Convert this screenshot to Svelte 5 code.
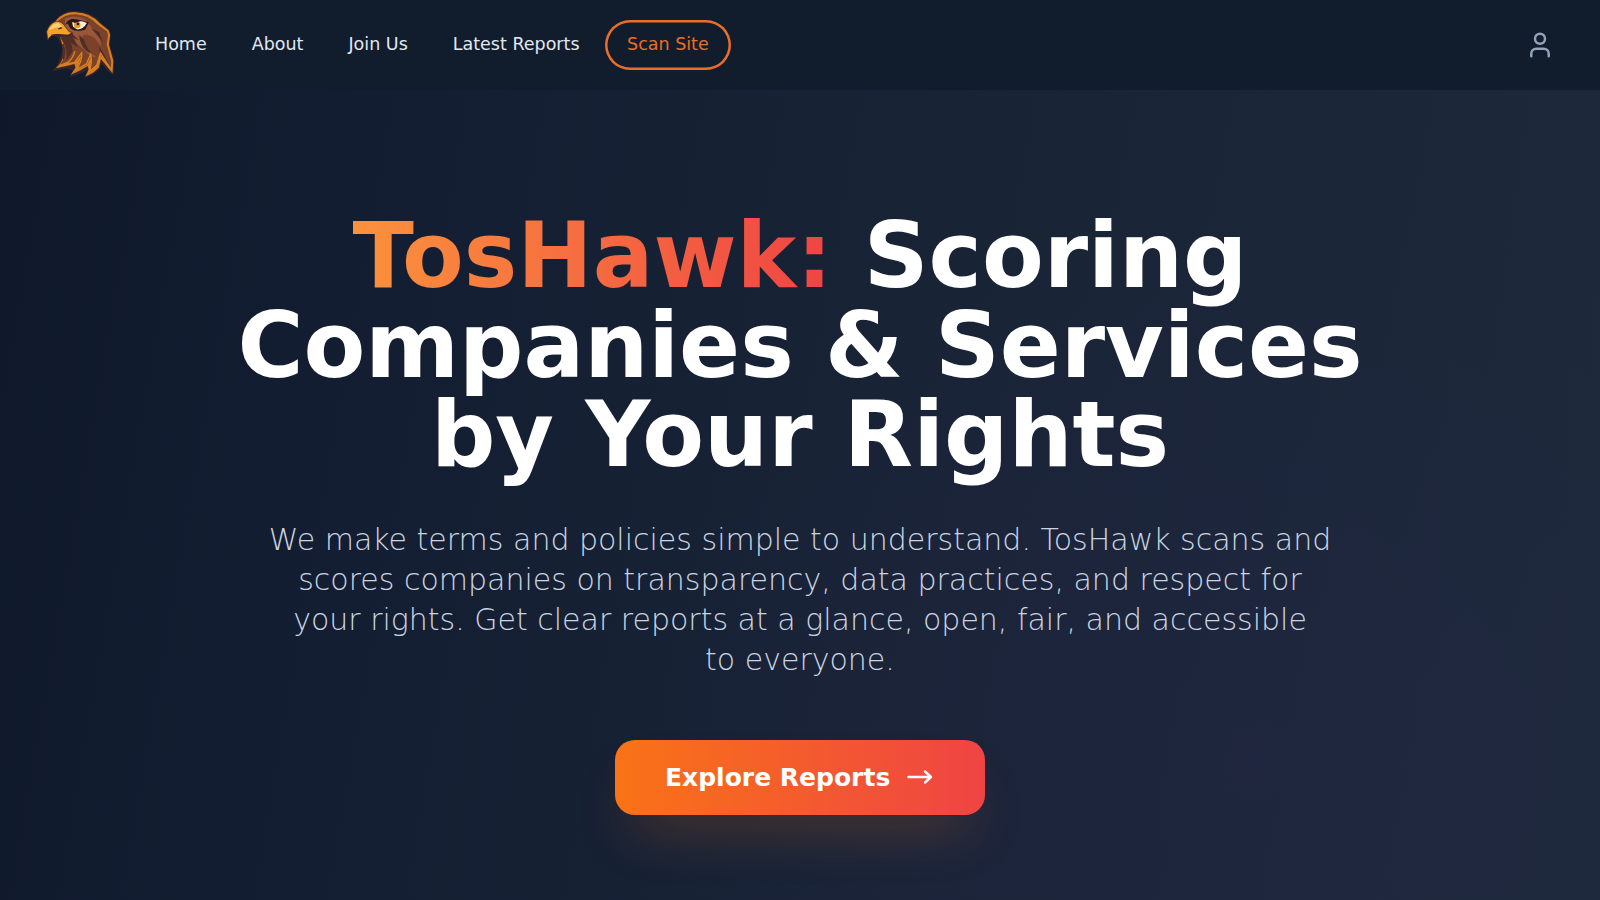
<script>
  const links = ['Home', 'About', 'Join Us', 'Latest Reports'];
</script>

<div class="page">
  <header>
    <svg class="logo" viewBox="30 30 207 207" preserveAspectRatio="none" role="img" aria-label="TosHawk">
      <path class="halo" d="M37 122 L33 96 Q39 72 62 61 Q82 35 119 36 Q167 38 194 70 L218 90 L222 106 L219 132 L232 178 L230 221 L213 208 L193 185 L190 203 L170 219 L145 228 L151 207 L125 218 L101 226 L112 206 L91 201 L49 210 Q83 179 78 132 L64 110 L44 106 Z" />
      <path class="rim" d="M61 64 Q84 37 120 39 Q165 41 190 71 L216 92 L220 105 L216 132 L229 178 L227 215 L193 174 L187 199 L170 213 L148 224 L157 205 L155 194 L129 208 L105 219 L119 199 L116 188 L95 193 L61 200 Q93 174 80 131 Z" />
      <path class="body" d="M67 65 Q88 44 119 45 Q158 47 182 74 L211 95 L214 105 L210 132 L223 180 L222 200 L192 161 L181 192 L160 210 L165 180 L163 170 L152 192 L122 206 L137 164 L119 181 L94 185 L72 191 Q97 165 83 122 Z" />
      <path class="light" d="M88 57 Q122 44 151 63 L170 89 L189 105 L194 139 L174 113 L153 103 L138 107 L151 136 L179 169 L163 166 L142 146 L121 126 L111 101 L89 84 Z" />
      <path class="shade" d="M70 103 L109 101 L129 120 L110 112 L128 141 L106 127 L111 151 L92 178 Q99 147 79 119 Z M129 105 L144 117 Q150 143 174 162 L151 151 Q132 134 129 105 Z M165 85 L188 97 L199 126 L186 110 Z M187 136 L205 165 L219 194 L191 160 Z" />
      <path class="feather" d="M117 151 Q113 170 97 183 L75 192 M117 182 L137 156 Q139 180 121 205 L151 188 L163 160 Q169 187 158 211 L181 191 L192 157 L223 205" />
      <path class="neck" d="M82 131 Q90 153 82 174" />
      <path class="brow" d="M89 75 Q97 55 124 60 L158 68 L147 90 Q123 98 104 86 L96 72 Z" />
      <path class="eye" d="M109 69 Q130 60 152 70 Q142 88 124 89 L112 81 Z" />
      <circle class="iris" cx="124" cy="76" r="9.5" />
      <circle class="pupil" cx="126" cy="73" r="4" />
      <path class="pupil" d="M100 62 L137 64 L117 70 Z" />
      <path class="beak" d="M38 119 L35 95 Q42 72 63 65 Q80 65 89 81 L100 95 L110 98 L98 105 L68 103 Q46 102 38 119 Z" />
      <path class="shine" d="M42 91 Q52 68 70 71 L80 82 L60 84 Z" />
      <path class="mouth" d="M48 106 L69 104 L95 108 L110 100 M69 87 L79 84" />
    </svg>
    <nav>
      {#each links as label}
        <a href="#top">{label}</a>
      {/each}
      <a class="scan" href="#scan">Scan Site</a>
    </nav>
    <button class="account" aria-label="Account">
      <svg viewBox="0 0 24 24"><circle cx="12" cy="7" r="4" /><path d="M19 21v-2a4 4 0 0 0-4-4H9a4 4 0 0 0-4 4v2" /></svg>
    </button>
  </header>
  <main>
    <h1><span>TosHawk:</span> Scoring<br />Companies &amp; Services<br />by Your Rights</h1>
    <p>We make terms and policies simple to understand. TosHawk scans and<br />scores companies on transparency, data practices, and respect for<br />your rights. Get clear reports at a glance, open, fair, and accessible<br />to everyone.</p>
    <a class="cta" href="#reports">
      Explore Reports
      <svg viewBox="0 0 26 16"><path d="M1.5 8H24M18 2.5L24 8L18 13.5" /></svg>
    </a>
  </main>
</div>

<style>
  :global(body) { margin: 0; overflow: hidden; }
  .page {
    height: 900px;
    overflow: hidden;
    font-family: "DejaVu Sans", sans-serif;
    background:
      radial-gradient(ellipse 620px 540px at 1260px 760px, rgba(38, 38, 78, 0.26), transparent),
      linear-gradient(100deg, #0f182b 0%, #141e32 25%, #192336 55%, #1e293b 100%);
  }
  header {
    box-sizing: border-box;
    height: 90px;
    display: flex;
    align-items: center;
    padding: 0 45px;
    background: #111c2d;
  }
  .logo { width: 71px; height: 72px; flex: none; }
  nav { display: flex; align-items: center; gap: 5px; margin-left: 19px; }
  nav a { padding: 0 20px 2px; font-size: 17.5px; line-height: 48px; color: #e2e8f0; text-decoration: none; white-space: nowrap; }
  nav a.scan { padding: 0 22.5px 2px; border-radius: 25px; box-shadow: inset 0 0 0 2.5px #ea6f26; color: #ea6f26; }
  .account { margin-left: auto; padding: 0; border: 0; background: none; display: flex; }
  .account svg { width: 30px; height: 30px; fill: none; stroke: #94a3b8; stroke-width: 2; stroke-linecap: round; stroke-linejoin: round; }
  main { display: flex; flex-direction: column; align-items: center; padding-top: 121px; text-align: center; }
  h1 { margin: 0; font-size: 90px; line-height: 89.6px; font-weight: 700; color: #fff; white-space: nowrap; }
  h1 span { background: linear-gradient(to right, #fb923c, #ef4444); background-clip: text; -webkit-background-clip: text; color: transparent; }
  p { margin: 40.2px 0 0; font-size: 30px; line-height: 40px; font-weight: 200; color: #cbd5e1; white-space: nowrap; }
  .cta {
    box-sizing: border-box;
    width: 370px;
    height: 75px;
    margin-top: 60px;
    display: flex;
    align-items: center;
    padding-left: 50px;
    gap: 17px;
    border-radius: 20px;
    background: linear-gradient(to right, #f97316, #ef4444);
    box-shadow: 0 31px 54px -18px rgba(249, 115, 22, 0.25);
    color: #fff;
    font-size: 25px;
    font-weight: 700;
    text-decoration: none;
    white-space: nowrap;
  }
  .cta svg { width: 26px; height: 16px; fill: none; stroke: #fff; stroke-width: 2.4; stroke-linecap: round; stroke-linejoin: round; }
  .halo { fill: #35252b; }
  .rim { fill: #d57d20; }
  .body { fill: #7b4229; }
  .light { fill: #995638; }
  .shade { fill: #512d28; }
  .feather { fill: none; stroke: #d98220; stroke-width: 4; stroke-linejoin: miter; }
  .neck { fill: none; stroke: #512d28; stroke-width: 6; }
  .brow, .pupil { fill: #28191c; }
  .eye { fill: #fff1dc; }
  .iris { fill: #e99827; }
  .beak { fill: #f4a128; stroke: #3a2623; stroke-width: 2; }
  .shine { fill: #ffd080; }
  .mouth { fill: none; stroke: #3e2724; stroke-width: 4; }
</style>
